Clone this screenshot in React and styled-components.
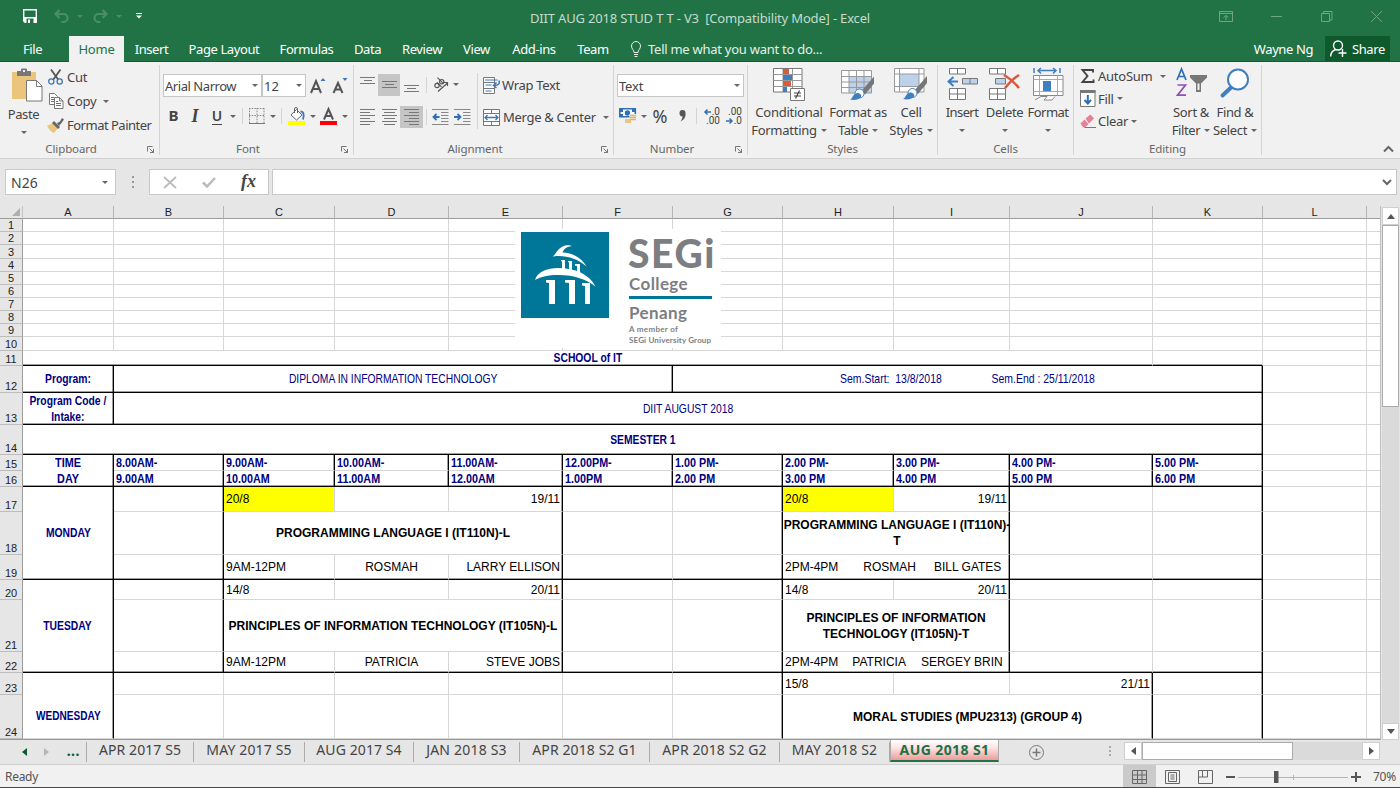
import React from "react";
import styled, { createGlobalStyle, css } from "styled-components";

const UI = `"Noto Sans", "Open Sans", sans-serif`;
const ARIAL = `"Liberation Sans", Arial, sans-serif`;

const Global = createGlobalStyle`
  * { box-sizing: border-box; }
  body { margin: 0; background: #e6e6e6; overflow: hidden; }
  svg { display: block; overflow: visible; }
`;

const Window = styled.div`
  width: 1400px;
  height: 788px;
  display: flex;
  flex-direction: column;
  font-family: ${UI};
  font-size: 13px;
  color: #444;
  white-space: nowrap;
  overflow: hidden;
  background: #e6e6e6;
  border-bottom: 1px solid #4a4a4a;
`;

/* ---------- title bar and ribbon tabs ---------- */
const TitleBar = styled.header`
  height: 36px;
  flex: none;
  background: #217346;
  display: grid;
  grid-template-columns: 400px 600px 400px;
  align-items: center;
`;
const QuickAccess = styled.div`
  display: flex;
  align-items: center;
  padding: 0 0 4px 23px;
`;
const QuickItem = styled.span`
  margin-right: ${(p) => p.$gap}px;
`;
const Title = styled.div`
  text-align: center;
  color: #c4dccf;
  white-space: pre;
  font-size: 13px;
  letter-spacing: -0.17px;
`;
const WindowButtons = styled.div`
  display: flex;
  justify-content: flex-end;
  align-items: center;
  gap: 38px;
  padding: 0 18px 3px 0;
`;
const TabBar = styled.nav`
  height: 26px;
  flex: none;
  background: #217346;
  border-bottom: 1px solid #165c33;
  display: flex;
  align-items: stretch;
`;
const Tab = styled.div`
  width: ${(p) => p.$w}px;
  padding-right: ${(p) => p.$pr || 0}px;
  display: flex;
  align-items: center;
  justify-content: center;
  height: 26px;
  color: ${(p) => (p.$on ? "#217346" : "#fff")};
  background: ${(p) => (p.$on ? "#f1f1f1" : "transparent")};
  letter-spacing: ${(p) => p.$ls ?? -0.4}px;
  font-size: 13px;
`;
const TellMe = styled.div`
  display: flex;
  align-items: center;
  gap: 7px;
  margin-left: 13px;
  flex: 1;
  color: #e3f0e8;
  letter-spacing: -0.26px;
`;
const User = styled.div`
  color: #fff;
  align-self: center;
  margin-right: 12px;
  letter-spacing: -0.4px;
`;
const Share = styled.div`
  width: 65px;
  margin-right: 10px;
  background: #0e5a2d;
  color: #fff;
  display: flex;
  align-items: center;
  gap: 5px;
  padding-left: 5px;
  letter-spacing: -0.4px;
`;

/* ---------- ribbon ---------- */
const Ribbon = styled.section`
  height: 97px;
  flex: none;
  background: #f1f1f1;
  border-bottom: 1px solid #d2d2d2;
  display: flex;
  padding-top: 3px;
  letter-spacing: -0.35px;
`;
const GroupBox = styled.div`
  width: ${(p) => p.$w}px;
  height: 90px;
  border-right: 1px solid #d4d4d4;
  display: grid;
  grid-template-rows: 76px 14px;
`;
const GroupBody = styled.div`
  display: flex;
  min-width: 0;
`;
const GroupFoot = styled.div`
  display: grid;
  grid-template-columns: ${(p) => (p.$launcher ? "1fr 17px" : "1fr")};
  align-items: center;
  justify-items: center;
  font-size: 11.5px;
  color: #666;
  letter-spacing: -0.1px;
  line-height: 16px;
`;
const Column = styled.div`
  display: flex;
  flex-direction: column;
  padding-left: ${(p) => p.$pl || 0}px;
  padding-top: ${(p) => p.$pt || 0}px;
  width: ${(p) => (p.$w ? p.$w + "px" : "auto")};
`;
const Line = styled.div`
  display: flex;
  align-items: center;
  height: ${(p) => p.$h}px;
  margin-top: ${(p) => p.$mt || 0}px;
`;
const Slot = styled.span`
  width: ${(p) => p.$w}px;
  height: ${(p) => (p.$on ? "22px" : "auto")};
  background: ${(p) => (p.$on ? "#c5c5c5" : "transparent")};
  display: flex;
  align-items: center;
  justify-content: center;
  flex: none;
`;
const Word = styled.span`
  margin: 0 ${(p) => p.$mr ?? 7}px 0 ${(p) => p.$ml ?? 3}px;
  letter-spacing: ${(p) => p.$ls ?? -0.3}px;
`;
const Rule = styled.i`
  width: 1px;
  height: ${(p) => p.$h || 16}px;
  background: #d4d4d4;
`;
const Select = styled.div`
  width: ${(p) => p.$w}px;
  height: 23px;
  border: 1px solid #c6c6c6;
  margin-right: ${(p) => p.$mr || 0}px;
  background: #fff;
  display: flex;
  justify-content: space-between;
  align-items: center;
  padding: 0 3px 0 1px;
  letter-spacing: ${(p) => p.$ls || 0}px;
`;
const Big = styled.div`
  width: ${(p) => p.$w}px;
  display: flex;
  flex-direction: column;
  align-items: center;
  padding-top: 3px;
  line-height: 18px;
  letter-spacing: ${(p) => p.$ls ?? -0.35}px;
`;
const BigArt = styled.div`
  height: 35px;
`;
const BigLine = styled.div`
  height: 18px;
  display: flex;
  align-items: center;
  gap: 4px;
`;
const Glyph = styled.b`
  font-family: ${(p) => (p.$serif ? `"Liberation Serif", serif` : UI)};
  font-style: ${(p) => (p.$italic ? "italic" : "normal")};
  font-weight: ${(p) => p.$weight || 700};
  font-size: ${(p) => p.$size || 15}px;
  line-height: ${(p) => (p.$under ? 16 : 18)}px;
  letter-spacing: 0;
  color: #444;
  padding-bottom: ${(p) => p.$lift || 0}px;
  border-bottom: ${(p) => (p.$under ? "1px solid #444" : "0")};
`;
const Collapse = styled.div`
  flex: 1;
  display: flex;
  align-items: flex-end;
  justify-content: flex-end;
  padding: 0 6px 6px 0;
`;

/* ---------- formula bar ---------- */
const FormulaBar = styled.section`
  height: 47px;
  flex: none;
  display: flex;
  padding: 10px 3px 0 5px;
`;
const Field = styled.div`
  height: 26px;
  width: ${(p) => (p.$w ? p.$w + "px" : "auto")};
  flex: ${(p) => (p.$w ? "none" : 1)};
  margin-left: ${(p) => p.$ml || 0}px;
  border: 1px solid #c9c9c9;
  background: #fff;
  display: flex;
  align-items: center;
  justify-content: ${(p) => p.$justify || "space-between"};
  padding: 0 ${(p) => p.$pr ?? 7}px 0 ${(p) => p.$pl ?? 5}px;
  font-size: 14px;
`;
const Grip = styled.div`
  width: 33px;
  height: 26px;
  display: flex;
  align-items: center;
  justify-content: center;
`;

/* ---------- sheet ---------- */
const SheetArea = styled.section`
  height: 534px;
  flex: none;
  display: grid;
  grid-template-columns: 1381px 19px;
  overflow: hidden;
`;
const Sheet = styled.div`
  position: relative;
  height: 534px;
  overflow: hidden;
  border-bottom: 1px solid #9a9a9a;
  border-right: 1px solid #c0c0c0;
  background: #fff;
  display: grid;
  grid-template-columns: 23px 91px 110px 111px 114px 114px 110px 110px 111px 116px 143px 110px 104px 14px;
  grid-template-rows: 13px 13px 13px 14px 13px 13px 13px 13px 13px 13px 14px 15px 27px 32px 30px 16px 16px 25px 43px 25px 20px 52px 21px 22px 44px;
  font-family: ${ARIAL};
  font-size: 12px;
  color: #000;
`;
const head = css`
  background: #e6e6e6;
  color: #222;
  font-size: 11px;
  line-height: 11px;
  display: flex;
  justify-content: center;
`;
const ColHead = styled.div`
  ${head}
  grid-row: 1;
  grid-column: ${(p) => p.$c};
  align-items: flex-end;
  border-right: 1px solid #b4b4b4;
  border-bottom: 1px solid #9c9c9c;
`;
const RowHead = styled.div`
  ${head}
  grid-column: 1;
  grid-row: ${(p) => p.$r};
  align-items: flex-end;
  border-bottom: 1px solid #bdbdbd;
  border-right: 1px solid #9c9c9c;
`;
const Corner = styled.div`
  ${head}
  grid-area: 1 / 1;
  align-items: flex-end;
  justify-content: flex-end;
  padding: 0 2px 2px 0;
  border-right: 1px solid #c4c4c4;
  border-bottom: 1px solid #9c9c9c;
`;
const gridLine = "1px solid #d6d6d6";
const inkLine = "1px solid #000";
const softInk = "rgba(0, 0, 0, 0.38)";
const Cell = styled.div`
  grid-row: ${(p) => p.$r} / span ${(p) => p.$rs || 1};
  grid-column: ${(p) => p.$c} / span ${(p) => p.$cs || 1};
  border-right: ${(p) => (p.$right ? inkLine : gridLine)};
  border-bottom: ${(p) => (p.$bottom ? inkLine : gridLine)};
  box-shadow: ${(p) =>
    [p.$right && `inset -1px 0 0 ${softInk}`, p.$bottom && `inset 0 -1px 0 ${softInk}`].filter(Boolean).join(",") || "none"};
  background: ${(p) => p.$bg || "#fff"};
  color: ${(p) => (p.$navy ? "#000080" : "#000")};
  font-size: ${(p) => (p.$navy ? 12.6 : 12)}px;
  font-weight: ${(p) => (p.$bold ? 700 : 400)};
  display: flex;
  align-items: center;
  justify-content: ${(p) => p.$align || "center"};
  text-align: center;
  line-height: 16px;
  white-space: pre;
  padding: ${(p) => p.$pad || "0 2px"};
`;
const CellText = styled.span`
  display: flex;
  flex: none;
  transform: ${(p) => (p.$narrow ? `scaleX(${p.$narrow})` : "none")};
  transform-origin: ${(p) => (p.$left ? "left" : "center")};
`;
const Gap = styled.span`
  width: ${(p) => p.$w}px;
`;
const Logo = styled.div`
  position: absolute;
  left: 515px;
  top: 23px;
  width: 206px;
  height: 119px;
  z-index: 2;
  background: #fff;
  display: flex;
  padding: 3px 0 0 6px;
`;
const LogoText = styled.div`
  margin-left: 20px;
  color: #7d7e82;
  font-family: Lato, sans-serif;
  font-weight: 700;
  display: flex;
  flex-direction: column;
`;
const LogoLine = styled.div`
  font-size: ${(p) => p.$size}px;
  line-height: ${(p) => p.$lh}px;
  letter-spacing: ${(p) => p.$ls || 0}px;
  margin-left: ${(p) => p.$ml || 0}px;
  font-weight: ${(p) => p.$weight || 700};
`;
const LogoBar = styled.i`
  height: 3px;
  width: 83px;
  margin: 2px 0 3px 0;
  background: #007698;
`;

/* ---------- scroll bars ---------- */
const VScroll = styled.div`
  display: flex;
  flex-direction: column;
  padding: 1px 1px 0 1px;
  background: #e6e6e6;
`;
const ScrollButton = styled.div`
  width: ${(p) => p.$w || 17}px;
  height: ${(p) => p.$h || 17}px;
  flex: none;
  background: #fff;
  border: 1px solid #cfcfcf;
  display: flex;
  align-items: center;
  justify-content: center;
`;
const VTrack = styled.div`
  flex: 1;
  background: #dadada;
`;
const VThumb = styled.div`
  height: 182px;
  background: #fff;
  border: 1px solid #ababab;
`;
const HScroll = styled.div`
  display: flex;
  width: 256px;
  margin: 2px 0 0 13px;
`;
const HTrack = styled.div`
  flex: 1;
  height: 18px;
  background: #dadada;
`;
const HThumb = styled.div`
  width: 151px;
  height: 18px;
  background: #fff;
  border: 1px solid #ababab;
`;

/* ---------- sheet tabs and status bar ---------- */
const SheetTabs = styled.section`
  height: 24px;
  flex: none;
  display: flex;
  font-size: 14px;
  color: #444;
`;
const TabNav = styled.div`
  width: 87px;
  display: flex;
  align-items: center;
  padding: 0 6px 0 22px;
  justify-content: space-between;
  color: #0e5a2d;
  border-right: 1px solid #ababab;
  height: 20px;
  margin-top: 2px;
`;
const Dots = styled.span`
  font-weight: 700;
  line-height: 12px;
  letter-spacing: 0.5px;
  padding-bottom: 2px;
`;
const SheetTab = styled.div`
  width: ${(p) => p.$w}px;
  height: 20px;
  margin-top: 2px;
  line-height: 15px;
  text-align: center;
  letter-spacing: ${(p) => p.$ls ?? 0}px;
  border-right: 1px solid #ababab;
  ${(p) =>
    p.$on &&
    css`
      margin-top: 0;
      height: 22px;
      line-height: 20px;
      font-weight: 700;
      color: #1e7145;
      border: 1px solid #ababab;
      border-top: 0;
      border-bottom: 2px solid #217346;
      background: linear-gradient(#fff, #fbe3e3 40%, #ee9a9a);
    `}
`;
const AddSheet = styled.div`
  width: 74px;
  display: flex;
  align-items: center;
  justify-content: center;
`;
const Push = styled.div`
  flex: 1;
`;
const StatusBar = styled.footer`
  flex: 1;
  background: #f1f1f1;
  border-top: 1px solid #d0d0d0;
  display: flex;
  align-items: center;
  padding: 0 3px 0 5px;
  font-size: 12px;
  letter-spacing: -0.3px;
  color: #555;
`;
const ViewButton = styled.div`
  width: 33px;
  height: 23px;
  display: flex;
  align-items: center;
  justify-content: center;
  background: ${(p) => (p.$on ? "#cacaca" : "transparent")};
`;
const Zoom = styled.div`
  display: flex;
  align-items: center;
  width: 175px;
  padding-left: 4px;
  gap: 3px;
`;
const Percent = styled.span`
  margin-left: 9px;
`;

/* ---------- drawings ---------- */
const Svg = ({ w, h, children, ...rest }) => (
  <svg width={w} height={h} viewBox={`0 0 ${w} ${h}`} fill="none" {...rest}>
    {children}
  </svg>
);
const Caret = ({ color = "#666" }) => (
  <Svg w={6} h={3}><path d="M0 0h6L3 3z" fill={color} /></Svg>
);
const Launcher = () => (
  <Svg w={7} h={7} stroke="#777"><path d="M.5 5.500v-5h5M2.500 2.500l4 4M6.500 3v3.500H3" /></Svg>
);
const Lines = ({ rows, w = 15, h = 16 }) => (
  <Svg w={w} h={h} stroke="#777">
    {rows.map(([x, y, len], i) => <path key={i} d={`M${x} ${y + 0.5}h${len}`} />)}
  </Svg>
);
const stack = (inset) => [0, 3, 6, 9, 12, 15].map((y, i) => [i % 2 ? inset : 0, y, i % 2 ? (inset === 2 ? 11 : 10) : 15]);

const SaveIcon = () => (
  <Svg w={14} h={14}>
    <path d="M.7.700h12.600v12.600H2.200L.7 11.800z" stroke="#fff" strokeWidth="1.400" />
    <path d="M.7 8h12.600v5.300H.7z" fill="#fff" />
    <path d="M3.500 9.500h7V14h-7z" fill="#217346" /><path d="M5 10.500h2V14H5z" fill="#fff" />
  </Svg>
);
const UndoIcon = ({ flip }) => (
  <Svg w={15} h={14} stroke="#4b8d69" strokeWidth="2.200" transform={flip ? "scale(-1 1)" : undefined}>
    <path d="M1.500 5h8a4 4 0 0 1 0 8H7.500M5.500 1l-4 4 4 4" />
  </Svg>
);
const PasteIcon = () => (
  <Svg w={31} h={34}>
    <path d="M0 4h24v27H0z" fill="#ecc57c" />
    <path d="M5 3h4V1.500a1 1 0 0 1 1-1h4a1 1 0 0 1 1 1V3h4v5H5z" fill="#777" />
    <path d="M11 2h2v2h-2z" fill="#f1f1f1" />
    <path d="M14.500 12.500h10l5.500 5.500v15H14.500z" fill="#fff" stroke="#777" /><path d="M24.500 12.500v6H30" stroke="#777" />
  </Svg>
);
const CutIcon = () => (
  <Svg w={16} h={16}>
    <path d="M3 .5 10.500 11M12.500.500 5 11" stroke="#555" strokeWidth="1.800" />
    <circle cx="3.300" cy="12.500" r="2.600" stroke="#3a78b9" strokeWidth="1.300" /><circle cx="11.700" cy="12.500" r="2.600" stroke="#3a78b9" strokeWidth="1.300" />
  </Svg>
);
const CopyIcon = () => (
  <Svg w={16} h={16}>
    <path d="M1.500.500h5l3 3v8h-8z" fill="#fff" stroke="#777" /><path d="M3 4.500h3M3 6.500h4M3 8.500h3" stroke="#3a78b9" />
    <path d="M6.500 4.500h5l3.500 3.500v7.500H6.500z" fill="#fff" stroke="#777" /><path d="M11.500 4.500V8H15" stroke="#777" /><path d="M8 8.500h2M8 10.500h5M8 12.500h5" stroke="#3a78b9" />
  </Svg>
);
const PainterIcon = () => (
  <Svg w={17} h={16}>
    <path d="m0 9 6-3 5 5-4 5c-3-1-5-4-7-7z" fill="#ecc57c" />
    <path d="m7 4 6 6-2 2-6-6z" fill="#666" /><path d="m10 6 3-1.500L15 1l2 1.500L14.500 6 12 9z" fill="#666" />
  </Svg>
);
const GrowFont = ({ down }) => (
  <Svg w={16} h={16}>
    <path d={down ? "M1.500 15 6 5l4.500 10M3 11.500h6" : "M1 15 6 3 11 15M3 11h6"} stroke="#555" strokeWidth="2" />
    <path d={down ? "M10.500 0h5L13 3z" : "M10.500 3h5L13 0z"} fill="#3a78b9" />
  </Svg>
);
const BorderIcon = () => (
  <Svg w={16} h={16} stroke="#888">
    <path d="M.5 0v15M15 0v15M0 .5h15M8 0v15M0 7.500h15" strokeDasharray="1.500 1.200" /><path d="M0 15.500h16" stroke="#777" />
  </Svg>
);
const FillColorIcon = () => (
  <Svg w={17} h={18}>
    <path d="m3 8 5.500-5.500L14 8l-5.500 5z" fill="#fff" stroke="#666" /><path d="M6.500 6V2a1.500 1.500 0 0 1 3 0v4" stroke="#666" />
    <path d="M12.500 4.500c3 0 4 3 2.500 8" stroke="#3a78b9" strokeWidth="1.800" />
    <path d="M0 14h17v4H0z" fill="#ffff00" />
  </Svg>
);
const FontColorIcon = () => (
  <Svg w={17} h={18}>
    <path d="M4 12.500 8.500 2 13 12.500M5.500 9h6" stroke="#555" strokeWidth="2" /><path d="M0 14h17v4H0z" fill="#fb0007" />
  </Svg>
);
const AngleIcon = () => (
  <Svg w={16} h={16}>
    <g stroke="#555" strokeWidth="1.200">
      <circle cx="4" cy="8.500" r="2.200" /><path d="m4 5.300 4.500 4.500M4.500.700l6 6" /><circle cx="8.700" cy="4.700" r="2.200" />
      <path d="M5 14.500 14.500 6M11 5.500h3.500V9" />
    </g>
  </Svg>
);
const IndentIcon = ({ right }) => (
  <Svg w={17} h={16}>
    <path d="M0 .5h16.500M9 3.500h7.500M9 6.500h7.500M9 9.500h7.500M9 12.500h7.500M0 15.500h16.500" stroke="#888" />
    <path d={right ? "M0 8h6M3.500 5l3 3-3 3" : "M7.500 8h-6M4.500 5l-3 3 3 3"} stroke="#2f6fb3" strokeWidth="1.800" />
  </Svg>
);
const WrapIcon = () => (
  <Svg w={17} h={17}>
    <path d="M.5.500h11v16H.5zM.5 5.500h11M.5 11.500h11" fill="#fff" stroke="#777" />
    <path d="M2 3h12.500M2.500 8h6M2.500 14h6" stroke="#3a78b9" /><path d="M16 3.500c1 3-.5 5-4.500 5M13.500 5.500l-3 3 3 2.500" stroke="#3a78b9" strokeWidth="1.500" />
  </Svg>
);
const MergeIcon = () => (
  <Svg w={17} h={17}>
    <path d="M.5.500h16v16H.5zM8.500.500v4M8.500 12.500v4M.5 4.500h16M.5 12.500h16" fill="#fff" stroke="#777" />
    <path d="M2 8.500h13M4.500 6l-2.500 2.500L4.500 11M12.500 6 15 8.500 12.500 11" stroke="#3a78b9" strokeWidth="1.300" />
  </Svg>
);
const MoneyIcon = () => (
  <Svg w={18} h={16}>
    <path d="M.8.800h15.500v8H.8z" stroke="#2f6fb3" strokeWidth="1.600" fill="#fff" /><path d="M1 1h3v3H1zM13 1h3v3h-3zM1 6h3v3H1z" fill="#2f6fb3" /><circle cx="8.500" cy="5" r="2.700" fill="#2f6fb3" />
    <path d="M10.500 6h7v7h-7zM5.500 10.500h6v5.500h-6z" fill="#f1f1f1" />
    <path d="M11 7.500h6M11 9.500h6M11 11.500h6M6 12h6M6 14h6" stroke="#e6b566" strokeWidth="1.500" />
  </Svg>
);
const DecimalArt = styled.div`
  width: 17px;
  font-family: Roboto, sans-serif;
  font-size: 10px;
  line-height: 9px;
  letter-spacing: 0;
  display: flex;
  flex-direction: column;
`;
const DecimalRow = styled.div`
  display: flex;
  align-items: center;
  justify-content: flex-end;
  gap: 1px;
  height: 9px;
`;
const SmallArrow = ({ right }) => (
  <Svg w={7} h={6} stroke="#2f6fb3" strokeWidth="1.500"><path d={right ? "M0 3h6M3.500.500 6 3 3.500 5.500" : "M7 3H1M3.500.500 1 3l2.500 2.500"} /></Svg>
);
const Brush = ({ x, y }) => (
  <g transform={`translate(${x} ${y})`}>
    <path d="M24 0v7l-9 11-4-3z" fill="#777" />
    <circle cx="9.500" cy="17" r="4.500" fill="#fff" stroke="#3f7fc0" strokeWidth="1" />
    <path d="M0 23c3-1 2-5 7-6.500 3 0 5 2 4 4C9 23.500 4 24 0 23z" fill="#3f7fc0" />
  </g>
);
const ConditionalIcon = () => (
  <Svg w={32} h={33}>
    <path d="M.5.500h28.500v23.500H.5z" fill="#fff" stroke="#777" />
    <path d="M10 1v23M19.500 1v23M.5 6.500H29M.5 12.500H29M.5 18.500H29" stroke="#999" />
    <path d="M10 1h6v5h-6zM10 13h8v5h-8z" fill="#d65c3b" /><path d="M10 7h9v5h-9zM10 19h4v5h-4z" fill="#3f7fc0" />
    <path d="M17.500 20.500h14v12h-14z" fill="#fff" stroke="#777" /><path d="M21 25h7M21 28h7M26.500 22.500l-4 8" stroke="#444" strokeWidth="1.200" />
  </Svg>
);
const TableIcon = () => (
  <Svg w={34} h={32} transform="translate(0 2)">
    <path d="M.5.500h30v22H.5z" fill="#fff" /><path d="M8 6h22v17H8z" fill="#bdd2ea" />
    <path d="M.5.500h30v22.500H.5zM8 0v23M15.500 0v23M23 0v23M0 6.500h30M0 12h30M0 17.500h30" stroke="#999" />
    <Brush x={9} y={6.500} />
  </Svg>
);
const CellStylesIcon = () => (
  <Svg w={34} h={33}>
    <path d="M.5.500h29.500v23H.5z" fill="#fff" /><path d="M6 6h19v12.500H6z" fill="#bdd2ea" />
    <path d="M.5.500h29.500v23.500H.5zM5.500 0v24M25 0v24M0 6h30M0 18.500h30" stroke="#999" />
    <Brush x={9} y={8} />
  </Svg>
);
const InsertIcon = () => (
  <Svg w={31} h={33}>
    <path d="M2.500.500h16v5.500h-16zM10.500.500v5.500M2.500 20.500h16v11h-16zM10.500 20.500v11M2.500 26h16" fill="#fff" stroke="#777" />
    <path d="M15.500 10.500h15v5.500h-15zM23 10.500V16" fill="#bdd2ea" stroke="#777" />
    <path d="M11 13.500H1.500M6.500 9 1.500 13.500l5 4.500" stroke="#3f7fc0" strokeWidth="2" />
  </Svg>
);
const DeleteIcon = () => (
  <Svg w={31} h={33}>
    <path d="M.5.500h16v5.500H.5zM8.500.500v5.500M.5 20.500h16v11H.5zM8.500 20.500v11M.5 26h16" fill="#fff" stroke="#777" />
    <path d="M6.500 10.500h10v5.500h-10z" fill="#bdd2ea" stroke="#777" />
    <path d="M15 7c5 3 11 8 15 13M30 7c-5 3-10 8-14 13" stroke="#d9583a" strokeWidth="2.500" />
  </Svg>
);
const FormatIcon = () => (
  <Svg w={31} h={33}>
    <path d="M1 0v5M27 0v5" stroke="#3f7fc0" strokeWidth="1.500" /><path d="M5 2.500h18M8 0 5 2.500 8 5.500M20 0l3 2.500L20 5.500" stroke="#3f7fc0" strokeWidth="1.500" />
    <path d="M.5 7.500h29.500v20H.5z" fill="#fff" stroke="#888" /><path d="M.5 11.500H30M.5 23.500H30M6.500 7.500v20M24.500 7.500v20" stroke="#aaa" />
    <path d="M10 13h8v10h-8z" fill="#3f7fc0" /><path d="M2 32 8 28.500h6L11 32h8l3-3.500" stroke="#888" fill="#fff" />
  </Svg>
);
const SigmaIcon = () => (
  <Svg w={13} h={14}><path d="M12 3.500V1H1.500l5 6-5 6H12.500v-2.500" stroke="#444" strokeWidth="1.900" /></Svg>
);
const FillDownIcon = () => (
  <Svg w={16} h={17}><path d="M.5.500h14.500v16H.5z" fill="#fff" stroke="#777" /><path d="M0 0h15.500v3H0z" fill="#777" /><path d="M7.800 5v8.500M4.500 10l3.300 3.500L11 10" stroke="#2f6fb3" strokeWidth="2" /></Svg>
);
const EraserIcon = () => (
  <Svg w={16} h={15}><path d="m5.500 4.500 5-4L14 4.500l-5 5z" fill="#e88196" /><path d="m4.500 5.500 4 4.700-3.500 3H3L.5 9.500z" fill="#e88196" /><path d="M4.500 13.500H16" stroke="#777" /></Svg>
);
const SortIcon = () => (
  <Svg w={31} h={29}>
    <path d="M1 12 5.500 1 10 12M2.500 8.500h6" stroke="#2f6fb3" strokeWidth="1.700" /><path d="M1.500 17h8l-8 10.200H10" stroke="#8e50b5" strokeWidth="1.700" />
    <path d="M14 7h17v2.500l-6 6V24h-5v-8.500l-6-6z" fill="#777" /><path d="M21.500 15.500h2V22h-2z" fill="#f1f1f1" />
  </Svg>
);
const FindIcon = () => (
  <Svg w={30} h={30}><path d="M2.500 27.500 11 19.500" stroke="#3f7fc0" strokeWidth="4" strokeLinecap="round" /><circle cx="18" cy="11.500" r="10" fill="#fff" stroke="#3f7fc0" strokeWidth="2" /></Svg>
);
const SegiMark = () => (
  <Svg w={88} h={86} fill="#fff">
    <path d="M0 0h88v86H0z" fill="#007698" />
    <path d="M31 25c4-2 5-9 13-11.500 3-.7 6-.3 7 .8-5 0-8 2.700-9.500 6.200 10 .5 19 5 24 14-8-7-17-10.500-28-10.500-3 0-5 .3-6.500 1z" />
    <path d="M14 48c2-8 12-12 23-12 17 0 31 6 37.500 18.500-9-7-21-11.500-37-11.500-11 0-17 1.500-23.500 5z" />
    <path d="M40 28h4v9h-3v-7.500l-1-.5zM47 29h4v10h-3v-8.500l-1-.5zM54 32h5v9h-3v-7l-2-.5z" />
    <path d="M25 48h9v24h-6V51l-3-.5zM44 48h10v24h-6V51l-4-.5zM61 51h8v21h-5V54l-3-.5z" />
  </Svg>
);
const Tri = ({ dir, color = "#555" }) => {
  const d = { up: "M0 5 4 0l4 5z", down: "M0 0h8L4 5z", left: "M5 0v8L0 4z", right: "M0 0v8l5-4z" }[dir];
  const flat = dir === "up" || dir === "down";
  return <Svg w={flat ? 8 : 5} h={flat ? 5 : 8}><path d={d} fill={color} /></Svg>;
};

/* ---------- data ---------- */
const MENU = [["Insert", 55], ["Page Layout", 90], ["Formulas", 75], ["Data", 47], ["Review", 62], ["View", 47], ["Add-ins", 68], ["Team", 50]];
const COLS = "ABCDEFGHIJKL".split("");
const TIMES = [
  ["8.00AM-", "9.00AM"], ["9.00AM-", "10.00AM"], ["10.00AM-", "11.00AM"], ["11.00AM-", "12.00AM"], ["12.00PM-", "1.00PM"],
  ["1.00 PM-", "2.00 PM"], ["2.00 PM-", "3.00 PM"], ["3.00 PM-", "4.00 PM"], ["4.00 PM-", "5.00 PM"], ["5.00 PM-", "6.00 PM"],
];
const L = "flex-start";
const R = "flex-end";
const label = { navy: true, bold: true };

/* Sheet rows and columns are 1-based; the grid has one extra track for the headings. */
const CELLS = [
  { r: 11, c: 1, cs: 10, t: "SCHOOL of IT", ...label, bottom: true },
  { r: 11, c: 11, bottom: true },
  { r: 12, c: 1, t: "Program:", ...label, right: true, bottom: true },
  { r: 12, c: 2, cs: 5, t: "DIPLOMA IN INFORMATION TECHNOLOGY", navy: true, right: true, bottom: true },
  { r: 12, c: 7, cs: 5, t: ["Sem.Start:  13/8/2018", 60, "Sem.End : 25/11/2018"], navy: true, right: true, bottom: true, sx: 0.83 },
  { r: 13, c: 1, t: "Program Code /\nIntake:", ...label, right: true, bottom: true },
  { r: 13, c: 2, cs: 10, t: "DIIT AUGUST 2018", navy: true, right: true, bottom: true },
  { r: 14, c: 1, cs: 11, t: "SEMESTER 1", ...label, right: true, bottom: true },
  { r: 15, c: 1, rs: 2, t: "TIME\nDAY", ...label, right: true, bottom: true, sx: 0.86 },
  ...TIMES.flatMap(([a, b], i) => [
    { r: 15, c: i + 2, t: a, ...label, align: L, right: true, sx: 0.855 },
    { r: 16, c: i + 2, t: b, ...label, align: L, right: true, bottom: true, sx: 0.855 },
  ]),
  { r: 17, c: 1, rs: 3, t: "MONDAY", ...label, right: true, bottom: true },
  { r: 20, c: 1, rs: 3, t: "TUESDAY", ...label, right: true, bottom: true },
  { r: 23, c: 1, rs: 2, t: "WEDNESDAY", ...label, right: true, pad: "20px 0 0 0", sx: 0.8 },
  { r: 17, c: 3, t: "20/8", align: L, bg: "#ffff00" },
  { r: 17, c: 5, t: "19/11", align: R, right: true },
  { r: 18, c: 3, cs: 3, t: "PROGRAMMING LANGUAGE I (IT110N)-L", bold: true, right: true },
  { r: 19, c: 3, t: "9AM-12PM", align: L, bottom: true },
  { r: 19, c: 4, t: "ROSMAH", bottom: true },
  { r: 19, c: 5, t: "LARRY ELLISON", align: R, right: true, bottom: true },
  { r: 20, c: 3, t: "14/8", align: L },
  { r: 20, c: 5, t: "20/11", align: R, right: true },
  { r: 21, c: 3, cs: 3, t: "PRINCIPLES OF INFORMATION TECHNOLOGY (IT105N)-L", bold: true, right: true },
  { r: 22, c: 3, t: "9AM-12PM", align: L, bottom: true },
  { r: 22, c: 4, t: "PATRICIA", bottom: true },
  { r: 22, c: 5, t: "STEVE JOBS", align: R, right: true, bottom: true },
  { r: 17, c: 8, t: "20/8", align: L, bg: "#ffff00" },
  { r: 17, c: 9, t: "19/11", align: R, right: true },
  { r: 18, c: 8, cs: 2, t: "PROGRAMMING LANGUAGE I (IT110N)-\nT", bold: true, right: true, pad: "0 0 0 2px" },
  { r: 19, c: 8, cs: 2, t: ["2PM-4PM", 25, "ROSMAH", 18, "BILL GATES"], align: L, right: true, bottom: true },
  { r: 20, c: 8, t: "14/8", align: L },
  { r: 20, c: 9, t: "20/11", align: R, right: true },
  { r: 21, c: 8, cs: 2, t: "PRINCIPLES OF INFORMATION\nTECHNOLOGY (IT105N)-T", bold: true, right: true },
  { r: 22, c: 8, cs: 2, t: ["2PM-4PM", 14, "PATRICIA", 15, "SERGEY BRIN"], align: L, right: true, bottom: true },
  { r: 23, c: 8, t: "15/8", align: L },
  { r: 23, c: 10, t: "21/11", align: R, right: true },
  { r: 24, c: 8, cs: 3, t: "MORAL STUDIES (MPU2313) (GROUP 4)", bold: true, right: true },
];

const taken = new Set();
CELLS.forEach(({ r, c, rs = 1, cs = 1 }) => {
  for (let i = r; i < r + rs; i++) for (let j = c; j < c + cs; j++) taken.add(`${i}:${j}`);
});
const RIGHT_EDGES = { day: [2, 5, 7, 9, 11], late: [7, 10, 11] };
const BLANKS = [];
for (let r = 1; r <= 24; r++) {
  for (let c = 1; c <= 13; c++) {
    if (taken.has(`${r}:${c}`)) continue;
    const edges = r >= 23 ? RIGHT_EDGES.late : r >= 17 ? RIGHT_EDGES.day : [];
    BLANKS.push({ r, c, right: edges.includes(c), bottom: (r === 19 || r === 22) && c <= 11 });
  }
}

const SheetCell = ({ d }) => (
  <Cell $r={d.r + 1} $c={d.c + 1} $rs={d.rs} $cs={d.cs} $right={d.right} $bottom={d.bottom} $bg={d.bg} $navy={d.navy}
    $bold={d.bold} $align={d.align} $pad={d.pad}>
    {d.t && (
      <CellText $narrow={d.navy && (d.sx || 0.82)} $left={d.align === L}>
        {Array.isArray(d.t) ? d.t.map((t, i) => (typeof t === "number" ? <Gap key={i} $w={t} /> : <span key={i}>{t}</span>)) : d.t}
      </CellText>
    )}
  </Cell>
);

const Group = ({ w, name, launcher, children }) => (
  <GroupBox $w={w}>
    <GroupBody>{children}</GroupBody>
    <GroupFoot $launcher={launcher}><span>{name}</span>{launcher && <Launcher />}</GroupFoot>
  </GroupBox>
);
const BigButton = ({ w, art, lines, ls }) => (
  <Big $w={w} $ls={ls}>
    <BigArt>{art}</BigArt>
    <BigLine>{lines[0]}</BigLine>
    <BigLine>{lines[1]}<Caret /></BigLine>
  </Big>
);

export default function App() {
  return (
    <Window>
      <Global />
      <TitleBar>
        <QuickAccess>
          <QuickItem $gap={17}><SaveIcon /></QuickItem>
          <QuickItem $gap={8}><UndoIcon /></QuickItem>
          <QuickItem $gap={10}><Caret color="#4b8d69" /></QuickItem>
          <QuickItem $gap={8}><UndoIcon flip /></QuickItem>
          <QuickItem $gap={14}><Caret color="#4b8d69" /></QuickItem>
          <Svg w={6} h={6}><path d="M0 .5h6" stroke="#fff" /><path d="M0 2.500h6L3 5.500z" fill="#fff" /></Svg>
        </QuickAccess>
        <Title>{"DIIT AUG 2018 STUD T T - V3  [Compatibility Mode] - Excel"}</Title>
        <WindowButtons>
          <Svg w={14} h={11} stroke="#6fa587"><path d="M.5.500h13v10H.5zM.5 2.500h13M7 9V4.500M4.500 6.500 7 4.500l2.500 2" /></Svg>
          <Svg w={12} h={11} stroke="#6fa587"><path d="M0 5.500h11" /></Svg>
          <Svg w={12} h={11} stroke="#6fa587"><path d="M.5 2.500h8v8h-8zM2.500 2.500v-2H11V9H8.500" /></Svg>
          <Svg w={11} h={11} stroke="#6fa587"><path d="m0 0 11 11M11 0 0 11" /></Svg>
        </WindowButtons>
      </TitleBar>
      <TabBar>
        <Tab $w={69} $pr={4}>File</Tab>
        <Tab $w={55} $ls={-0.2} $on>Home</Tab>
        {MENU.map(([t, w]) => <Tab key={t} $w={w}>{t}</Tab>)}
        <TellMe>
          <Svg w={10} h={16} stroke="#e3f0e8"><path d="M3 11.500C3 9 .5 8 .5 5a4.500 4.500 0 0 1 9 0c0 3-2.500 4-2.500 6.500zM3 13.500h4M3.500 15.500h3" /></Svg>
          <span>Tell me what you want to do...</span>
        </TellMe>
        <User>Wayne Ng</User>
        <Share>
          <Svg w={17} h={17} stroke="#fff" strokeWidth="1.400"><circle cx="8" cy="5.500" r="4.500" /><path d="M.7 16.500c0-4 2-6 5-7M12.500 9v8M8.500 13h8" /></Svg>
          Share
        </Share>
      </TabBar>

      <Ribbon>
        <Group w={160} name="Clipboard" launcher>
          <Column $w={47} $pt={3}>
            <Column $pl={12}><PasteIcon /></Column>
            <Big $w={47}><BigLine>Paste</BigLine><BigLine><Caret /></BigLine></Big>
          </Column>
          <Column>
            <Line $h={24}><Slot $w={17}><CutIcon /></Slot><Word>Cut</Word></Line>
            <Line $h={24}><Slot $w={17}><CopyIcon /></Slot><Word>Copy</Word><Caret /></Line>
            <Line $h={24}><Slot $w={17}><PainterIcon /></Slot><Word $ls={-0.5}>Format Painter</Word></Line>
          </Column>
        </Group>
        <Group w={194} name="Font" launcher>
          <Column $pl={3} $pt={9}>
            <Line $h={23}>
              <Select $w={99} $ls={-0.45}>Arial Narrow<Caret /></Select>
              <Select $w={44}>12<Caret /></Select>
              <Slot $w={24}><GrowFont /></Slot>
              <Slot $w={19}><GrowFont down /></Slot>
            </Line>
            <Line $h={24} $mt={7}>
              <Slot $w={21}><Glyph $lift={2}>B</Glyph></Slot>
              <Slot $w={22}><Glyph $serif $italic $size={18}>I</Glyph></Slot>
              <Slot $w={22}><Glyph $weight={600} $size={14} $under>U</Glyph></Slot>
              <Slot $w={10}><Caret /></Slot>
              <Slot $w={8}><Rule /></Slot>
              <Slot $w={22}><BorderIcon /></Slot>
              <Slot $w={10}><Caret /></Slot>
              <Slot $w={6}><Rule /></Slot>
              <Slot $w={25}><FillColorIcon /></Slot>
              <Slot $w={7}><Caret /></Slot>
              <Slot $w={25}><FontColorIcon /></Slot>
              <Slot $w={7}><Caret /></Slot>
            </Line>
          </Column>
        </Group>
        <Group w={260} name="Alignment" launcher>
          <Column $pl={2} $pt={8}>
            <Line $h={23}>
              <Slot $w={22}><Lines rows={[[0, 0, 15], [4, 3, 8], [0, 6, 15]]} /></Slot>
              <Slot $w={22} $on><Lines rows={[[0, 4, 15], [3, 7, 9], [0, 10, 15]]} /></Slot>
              <Slot $w={23}><Lines rows={[[0, 8, 15], [3, 11, 9], [0, 14, 15]]} /></Slot>
              <Slot $w={6}><Rule /></Slot>
              <Slot $w={24}><AngleIcon /></Slot>
              <Slot $w={5}><Caret /></Slot>
            </Line>
            <Line $h={23} $mt={9}>
              <Slot $w={22}><Lines rows={stack(0)} /></Slot>
              <Slot $w={22}><Lines rows={stack(2)} /></Slot>
              <Slot $w={23} $on><Lines rows={stack(5)} /></Slot>
              <Slot $w={6}><Rule /></Slot>
              <Slot $w={22}><IndentIcon /></Slot>
              <Slot $w={22}><IndentIcon right /></Slot>
            </Line>
          </Column>
          <Column $pl={4} $pt={8}><Rule $h={56} /></Column>
          <Column $pl={5} $pt={8}>
            <Line $h={24}><WrapIcon /><Word $ml={2}>Wrap Text</Word></Line>
            <Line $h={24} $mt={8}><MergeIcon /><Word>Merge &amp; Center</Word><Caret /></Line>
          </Column>
        </Group>
        <Group w={134} name="Number" launcher>
          <Column $pl={3} $pt={9}>
            <Line $h={23}><Select $w={127} $ls={-0.2}>Text<Caret /></Select></Line>
            <Line $h={24} $mt={7}>
              <Slot $w={22}><MoneyIcon /></Slot>
              <Slot $w={9}><Caret /></Slot>
              <Slot $w={24}><Glyph $weight={400} $size={18}>%</Glyph></Slot>
              <Slot $w={20}>
                <Svg w={7} h={12}><path d="M.5 3A3 3 0 0 1 6.500 3c.5 4-1.500 7-5 8.500 1.500-2 2-3.500 2-5A3 3 0 0 1 .5 3z" fill="#555" /></Svg>
              </Slot>
              <Slot $w={8}><Rule /></Slot>
              <Slot $w={23}><DecimalArt><DecimalRow><SmallArrow />.0</DecimalRow><DecimalRow>.00</DecimalRow></DecimalArt></Slot>
              <Slot $w={21}><DecimalArt><DecimalRow>.00</DecimalRow><DecimalRow><SmallArrow right />.0</DecimalRow></DecimalArt></Slot>
            </Line>
          </Column>
        </Group>
        <Group w={190} name="Styles">
          <Column $pl={2} />
          <BigButton w={78} art={<ConditionalIcon />} lines={["Conditional", "Formatting"]} ls={-0.25} />
          <BigButton w={60} art={<TableIcon />} lines={["Format as", "Table"]} ls={-0.4} />
          <BigButton w={46} art={<CellStylesIcon />} lines={["Cell", "Styles"]} />
        </Group>
        <Group w={136} name="Cells">
          <Column $pl={3} />
          <BigButton w={42} art={<InsertIcon />} lines={["Insert", ""]} ls={-0.6} />
          <BigButton w={43} art={<DeleteIcon />} lines={["Delete", ""]} />
          <BigButton w={44} art={<FormatIcon />} lines={["Format", ""]} ls={-0.5} />
        </Group>
        <Group w={188} name="Editing">
          <Column $pl={6} $w={95}>
            <Line $h={22}><Slot $w={15}><SigmaIcon /></Slot><Word $mr={8} $ls={-0.25}>AutoSum</Word><Caret /></Line>
            <Line $h={23}><Slot $w={15}><FillDownIcon /></Slot><Word $mr={3}>Fill</Word><Caret /></Line>
            <Line $h={22}><Slot $w={15}><EraserIcon /></Slot><Word $mr={3}>Clear</Word><Caret /></Line>
          </Column>
          <BigButton w={44} art={<SortIcon />} lines={["Sort &", "Filter"]} />
          <BigButton w={44} art={<FindIcon />} lines={["Find &", "Select"]} />
        </Group>
        <Collapse><Svg w={11} h={6} stroke="#666" strokeWidth="2"><path d="M1 5.500 5.500 1 10 5.500" /></Svg></Collapse>
      </Ribbon>

      <FormulaBar>
        <Field $w={111}>N26<Caret /></Field>
        <Grip><Svg w={2} h={12}><path d="M0 0h2v2H0zM0 5h2v2H0zM0 10h2v2H0z" fill="#999" /></Svg></Grip>
        <Field $w={120} $justify="flex-start" $pl={0} $pr={0}>
          <Slot $w={39}><Svg w={12} h={11} stroke="#bbb" strokeWidth="1.800"><path d="m0 0 12 11M12 0 0 11" /></Svg></Slot>
          <Slot $w={40}><Svg w={14} h={11} stroke="#bbb" strokeWidth="2.500"><path d="m1 5.500 4 4L13 1" /></Svg></Slot>
          <Slot $w={39}><Glyph $serif $italic $size={18} $lift={2}>fx</Glyph></Slot>
        </Field>
        <Field $ml={3} $justify="flex-end" $pr={5}><Svg w={8} h={6} stroke="#666" strokeWidth="2"><path d="M0 1 4 5 8 1" /></Svg></Field>
      </FormulaBar>

      <SheetArea>
        <Sheet>
          <Corner><Svg w={8} h={8}><path d="M8 0v8H0z" fill="#b0b0b0" /></Svg></Corner>
          {COLS.map((n, i) => <ColHead key={n} $c={i + 2}>{n}</ColHead>)}
          <ColHead $c={14} />
          {Array.from({ length: 24 }, (_, i) => <RowHead key={i} $r={i + 2}>{i + 1}</RowHead>)}
          {BLANKS.map((d) => <SheetCell key={`${d.r}:${d.c}`} d={d} />)}
          {CELLS.map((d) => <SheetCell key={`${d.r}:${d.c}`} d={d} />)}
          <Logo>
            <SegiMark />
            <LogoText>
              <LogoLine $size={39} $lh={42} $ls={1.6} $ml={-1} $weight={900}>SEGi</LogoLine>
              <LogoLine $size={17} $lh={20} $ls={0.4}>College</LogoLine>
              <LogoBar />
              <LogoLine $size={17} $lh={21} $ls={0.4}>Penang</LogoLine>
              <LogoLine $size={8} $lh={12} $ls={0.3}>A member of</LogoLine>
              <LogoLine $size={8} $lh={11} $ls={0.15}>SEGi University Group</LogoLine>
            </LogoText>
          </Logo>
        </Sheet>
        <VScroll>
          <ScrollButton $h={18}><Tri dir="up" /></ScrollButton>
          <VTrack><VThumb /></VTrack>
          <ScrollButton><Tri dir="down" /></ScrollButton>
        </VScroll>
      </SheetArea>

      <SheetTabs>
        <TabNav><Tri dir="left" color="#0e5a2d" /><Tri dir="right" color="#b5b5b5" /><Dots>...</Dots></TabNav>
        <SheetTab $w={107} $ls={0.1}>APR 2017 S5</SheetTab>
        <SheetTab $w={111} $ls={0.15}>MAY 2017 S5</SheetTab>
        <SheetTab $w={109} $ls={0.1}>AUG 2017 S4</SheetTab>
        <SheetTab $w={106} $ls={0.2}>JAN 2018 S3</SheetTab>
        <SheetTab $w={130} $ls={0.1}>APR 2018 S2 G1</SheetTab>
        <SheetTab $w={130} $ls={0.1}>APR 2018 S2 G2</SheetTab>
        <SheetTab $w={110} $ls={0.15}>MAY 2018 S2</SheetTab>
        <SheetTab $w={109} $ls={0.4} $on>AUG 2018 S1</SheetTab>
        <AddSheet><Svg w={15} h={15} stroke="#777"><circle cx="7.500" cy="7.500" r="7" /><path d="M7.500 3.500v8M3.500 7.500h8" strokeWidth="1.500" /></Svg></AddSheet>
        <Push />
        <Svg w={2} h={24}><path d="M0 6h2v2H0zM0 10h2v2H0zM0 14h2v2H0z" fill="#aaa" /></Svg>
        <HScroll>
          <ScrollButton $w={18} $h={18}><Tri dir="left" /></ScrollButton>
          <HTrack><HThumb /></HTrack>
          <ScrollButton $w={18} $h={18}><Tri dir="right" /></ScrollButton>
        </HScroll>
        <Column $w={20} />
      </SheetTabs>
      <StatusBar>
        <span>Ready</span>
        <Push />
        <ViewButton $on><Svg w={15} h={14} stroke="#666"><path d="M.5.500h14v13H.5zM5.500.500v13M10 .5v13M.5 5h14M.5 9.500h14" /></Svg></ViewButton>
        <ViewButton><Svg w={15} h={14} stroke="#666"><path d="M.5.500h14v13H.5zM3.500 2.500h8v9h-8zM5.500 5h4M5.500 7h4M5.500 9h4" /></Svg></ViewButton>
        <ViewButton><Svg w={15} h={14} stroke="#666"><path d="M.5.500h14v13H.5zM4.500.500V7h-4M9.500.500V7h-5" /></Svg></ViewButton>
        <Zoom>
          <Svg w={122} h={12}>
            <path d="M0 6h9" stroke="#555" strokeWidth="2" /><path d="M12 6.500h110M67.500 4v5" stroke="#b5b5b5" />
            <path d="M48 0h4.500v12H48z" fill="#555" />
          </Svg>
          <Svg w={10} h={10} stroke="#555" strokeWidth="2"><path d="M0 5h10M5 0v10" /></Svg>
          <Percent>70%</Percent>
        </Zoom>
      </StatusBar>
    </Window>
  );
}
